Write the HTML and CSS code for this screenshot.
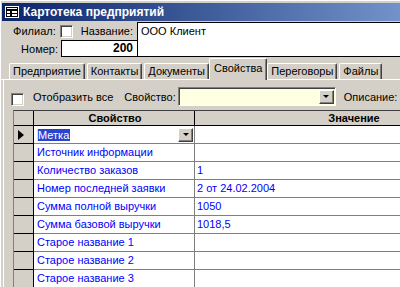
FILE: index.html
```html
<!DOCTYPE html>
<html lang="ru">
<head>
    <meta charset="UTF-8" />
    <title>Картотека предприятий</title>
    <link rel="stylesheet" href="styles.css">
</head>
<body>
    <div class="window">
        <div class="titlebar">
            <svg class="app-icon" width="14" height="12" viewBox="0 0 14 12">
                <rect x="0.5" y="0.5" width="13" height="11" fill="#000" stroke="#fff"/>
                <rect x="2" y="2" width="10" height="1" fill="#fff"/>
                <rect x="2" y="5" width="3" height="2" fill="#fff"/>
                <rect x="7" y="5" width="5" height="2" fill="#fff"/>
                <rect x="2" y="8" width="3" height="2" fill="#fff"/>
                <rect x="7" y="8" width="5" height="2" fill="#fff"/>
            </svg>
            <span>Картотека предприятий</span>
        </div>

        <div class="head">
            <div class="head-row">
                <span>Филиал:</span>
                <span class="check"></span>
                <span class="name-label">Название:</span>
            </div>
            <div class="name-box">ООО Клиент</div>
            <span class="num-label">Номер:</span>
            <div class="num-box">200</div>
        </div>

        <div class="tabs">
            <div class="tab">Предприятие</div>
            <div class="tab">Контакты</div>
            <div class="tab">Документы</div>
            <div class="tab active">Свойства</div>
            <div class="tab">Переговоры</div>
            <div class="tab">Файлы</div>
        </div>

        <div class="page">
            <div class="filter">
                <span class="check"></span>
                <span class="show-all">Отобразить все</span>
                <span class="prop-label">Свойство:</span>
                <div class="combo"><span class="drop-btn"><i class="arrow"></i></span></div>
                <span class="desc-label">Описание:</span>
            </div>

            <div class="grid">
                <div class="grid-row header">
                    <div class="sel"></div>
                    <div class="cell">Свойство</div>
                    <div class="cell">Значение</div>
                </div>
                <div class="grid-row current">
                    <div class="sel"><i class="pointer"></i></div>
                    <div class="cell prop">
                        <span class="caret"></span><span class="picked">Метка</span>
                        <span class="drop-btn"><i class="arrow"></i></span>
                    </div>
                    <div class="cell"></div>
                </div>
                <div class="grid-row">
                    <div class="sel"></div>
                    <div class="cell prop">Источник информации</div>
                    <div class="cell"></div>
                </div>
                <div class="grid-row">
                    <div class="sel"></div>
                    <div class="cell prop">Количество заказов</div>
                    <div class="cell">1</div>
                </div>
                <div class="grid-row">
                    <div class="sel"></div>
                    <div class="cell prop">Номер последней заявки</div>
                    <div class="cell">2 от 24.02.2004</div>
                </div>
                <div class="grid-row">
                    <div class="sel"></div>
                    <div class="cell prop">Сумма полной выручки</div>
                    <div class="cell">1050</div>
                </div>
                <div class="grid-row">
                    <div class="sel"></div>
                    <div class="cell prop">Сумма базовой выручки</div>
                    <div class="cell">1018,5</div>
                </div>
                <div class="grid-row">
                    <div class="sel"></div>
                    <div class="cell prop">Старое название 1</div>
                    <div class="cell"></div>
                </div>
                <div class="grid-row">
                    <div class="sel"></div>
                    <div class="cell prop">Старое название 2</div>
                    <div class="cell"></div>
                </div>
                <div class="grid-row">
                    <div class="sel"></div>
                    <div class="cell prop">Старое название 3</div>
                    <div class="cell"></div>
                </div>
            </div>
        </div>
    </div>
</body>
</html>
```

FILE: styles.css
```css
html, body {
    margin: 0;
    width: 400px;
    height: 287px;
    overflow: hidden;
}
body {
    background: #d4d0c8;
    font-family: "Liberation Sans", Arial, sans-serif;
    font-size: 11px;
    color: #000;
}
.window {
    border-top: 1px solid #fff;
    border-left: 1px solid #fff;
    height: 286px;
    overflow: hidden;
    white-space: nowrap;
}
.titlebar {
    display: flex;
    align-items: center;
    height: 18px;
    margin: 2px 0 0 1px;
    padding-left: 3px;
    background: linear-gradient(to right, #0a246a, #7292c9);
    color: #fff;
    font-weight: bold;
    font-size: 12px;
}
.app-icon {
    margin-right: 4px;
}

/* header fields */
.head {
    display: grid;
    grid-template-columns: 60px 76px 1fr;
    grid-template-rows: 18px 17px;
    margin-top: 1px;
}
.head-row {
    grid-column: 1 / 3;
    grid-row: 1;
    display: flex;
    align-items: center;
    justify-content: flex-end;
    padding-right: 4px;
}
.head-row .check {
    margin: 0 8px 0 4px;
}
.name-box {
    grid-column: 3;
    grid-row: 1 / 3;
    background: #fff;
    border: 1px solid #000;
    border-right: none;
    padding: 2px 3px;
}
.num-label {
    grid-column: 1;
    grid-row: 2;
    align-self: center;
    text-align: right;
    padding-right: 3px;
}
.num-box {
    grid-column: 2;
    grid-row: 2;
    background: #fff;
    border: 1px solid #000;
    border-right: none;
    font-weight: bold;
    font-size: 12px;
    text-align: right;
    padding-right: 4px;
    line-height: 15px;
}
.check {
    display: inline-block;
    flex-shrink: 0;
    width: 13px;
    height: 13px;
    box-sizing: border-box;
    background: #fff;
    border: 1px solid;
    border-color: #808080 #fff #fff #808080;
    box-shadow: inset 1px 1px #404040, inset -1px -1px #d4d0c8;
}

/* tabs */
.tabs {
    display: flex;
    align-items: flex-end;
    height: 22px;
    padding-left: 8px;
    border-bottom: 1px solid #fff;
}
.tab {
    height: 16px;
    line-height: 15px;
    box-sizing: border-box;
    padding: 0 3px;
    margin-right: 2px;
    border: 1px solid;
    border-bottom: none;
    border-color: #fff #404040 #404040 #fff;
    border-radius: 2px 2px 0 0;
    box-shadow: inset -1px 0 #808080;
}
.tab.active {
    height: 22px;
    line-height: 19px;
    margin: 0 0 -1px -2px;
    padding: 0 4px;
    background: #d4d0c8;
}

/* tab page */
.page {
    margin-left: 2px;
    border-left: 1px solid #fff;
    padding: 7px 0 0 7px;
}
.filter {
    display: flex;
    align-items: center;
    height: 19px;
}
.filter > * {
    flex-shrink: 0;
}
.filter .check {
    margin-top: 5px;
}
.show-all {
    margin-left: 9px;
}
.prop-label {
    margin-left: 11px;
}
.combo {
    display: flex;
    justify-content: flex-end;
    align-items: center;
    width: 158px;
    height: 19px;
    box-sizing: border-box;
    margin-left: 2px;
    padding-right: 1px;
    background: #ffffe1;
    border: 1px solid;
    border-color: #808080 #fff #fff #808080;
    box-shadow: inset 1px 1px #404040;
}
.desc-label {
    margin-left: 8px;
}
.drop-btn {
    display: flex;
    align-items: center;
    justify-content: center;
    width: 15px;
    height: 14px;
    box-sizing: border-box;
    background: #d4d0c8;
    border: 1px solid;
    border-color: #fff #404040 #404040 #fff;
    box-shadow: inset -1px -1px #808080;
}
.arrow {
    width: 0;
    height: 0;
    border-left: 3px solid transparent;
    border-right: 3px solid transparent;
    border-top: 3px solid #000;
}

/* datasheet */
.grid {
    margin: 4px 0 0 2px;
    width: 420px;
    border-top: 1px solid #404040;
    border-left: 1px solid #808080;
    background: #fff;
}
.grid-row {
    display: grid;
    grid-template-columns: 20px 161px 1fr;
    height: 18px;
}
.grid-row > div {
    box-sizing: border-box;
    border-bottom: 1px solid #808080;
    border-right: 1px solid #808080;
}
.grid-row .sel {
    background: #d4d0c8;
    border-color: #000;
    display: flex;
    align-items: center;
    padding-left: 4px;
}
.cell {
    color: #0000ff;
    padding-left: 2px;
    line-height: 17px;
}
.cell.prop {
    padding-left: 3px;
}
.header {
    height: 15px;
}
.header > div {
    background: #d4d0c8;
    border-bottom-color: #000;
    border-right-color: #000;
}
.header .cell {
    color: #000;
    font-weight: bold;
    text-align: center;
    line-height: 14px;
}
.header .cell:last-child {
    padding-left: 80px;
}
.pointer {
    width: 0;
    height: 0;
    border-top: 5px solid transparent;
    border-bottom: 5px solid transparent;
    border-left: 6px solid #000;
}
.current .prop {
    display: flex;
    align-items: center;
    padding-right: 1px;
}
.caret {
    width: 1px;
    height: 12px;
    background: #ffff00;
}
.picked {
    background: #2a44d0;
    color: #fff;
    line-height: 12px;
    padding-right: 1px;
}
.current .drop-btn {
    margin-left: auto;
}
```
